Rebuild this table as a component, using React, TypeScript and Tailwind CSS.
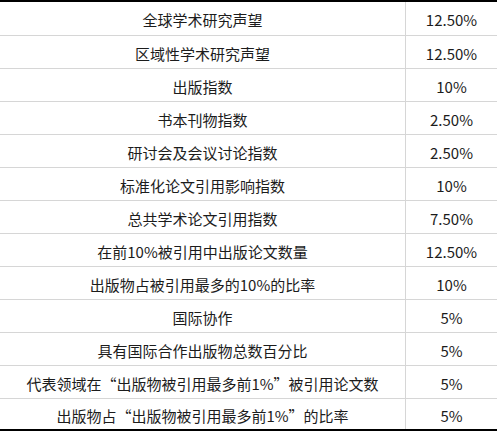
import React from "react";

const rows: [string, string][] = [
  ["全球学术研究声望", "12.50%"],
  ["区域性学术研究声望", "12.50%"],
  ["出版指数", "10%"],
  ["书本刊物指数", "2.50%"],
  ["研讨会及会议讨论指数", "2.50%"],
  ["标准化论文引用影响指数", "10%"],
  ["总共学术论文引用指数", "7.50%"],
  ["在前10%被引用中出版论文数量", "12.50%"],
  ["出版物占被引用最多的10%的比率", "10%"],
  ["国际协作", "5%"],
  ["具有国际合作出版物总数百分比", "5%"],
  ["代表领域在“出版物被引用最多前1%”被引用论文数", "5%"],
  ["出版物占“出版物被引用最多前1%”的比率", "5%"],
];

export default function App() {
  return (
    <div
      lang="zh-CN"
      className="w-[497px] h-[431px] bg-white overflow-hidden text-[15px] text-[#1c1c1c]"
      style={{ fontFamily: '"Microsoft YaHei", "Noto Sans CJK SC", "Noto Sans", sans-serif' }}
    >
      <div className="border-t-2 border-black">
        {rows.map(([a, b], i) => {
          const first = i === 0;
          const last = i === rows.length - 1;
          return (
            <div
              key={i}
              className={
                "flex " +
                (first
                  ? "h-[34px] border-b border-[#d6d6d6]"
                  : last
                  ? "h-[32px] border-b-2 border-black"
                  : "h-[33px] border-b border-[#d6d6d6]")
              }
            >
              <div className="w-[406px] border-r border-[#d6d6d6] flex items-center justify-center leading-none pt-[2px]">
                {a}
              </div>
              <div className="flex-1 flex items-center justify-center leading-none pt-[2px]">
                {b}
              </div>
            </div>
          );
        })}
      </div>
    </div>
  );
}
